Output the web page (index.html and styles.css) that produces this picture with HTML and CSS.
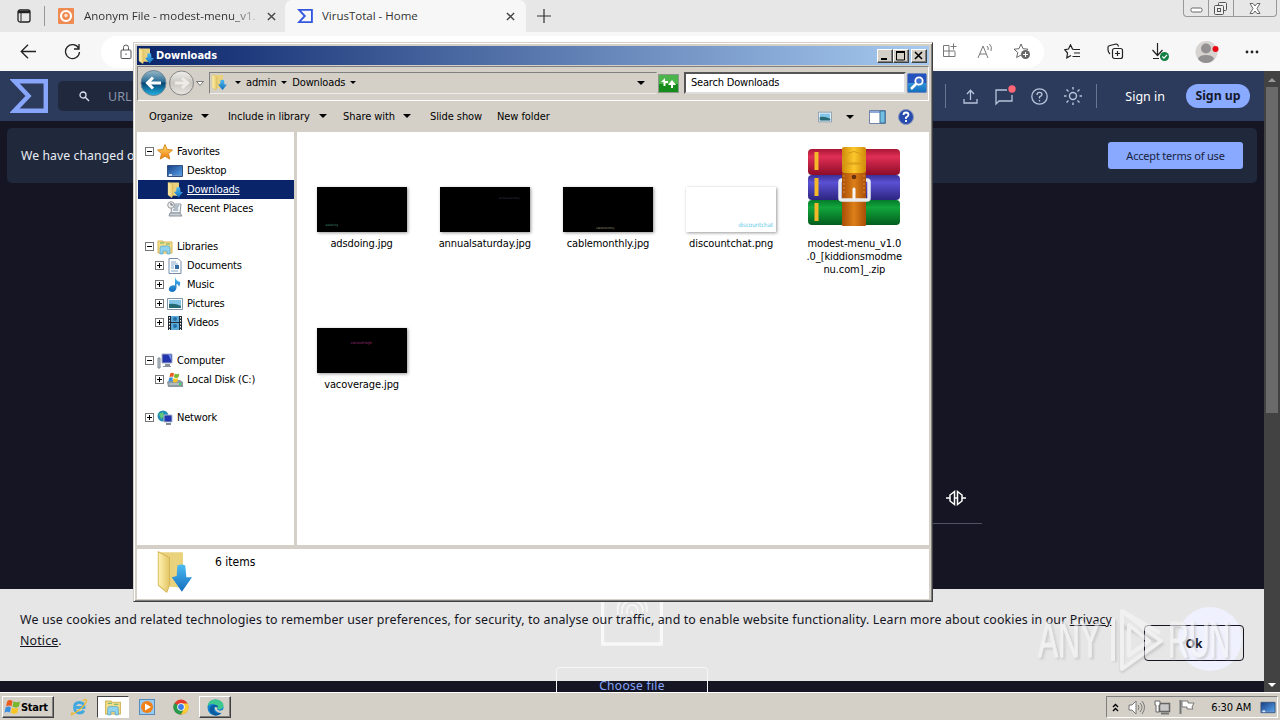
FILE: index.html
```html
<!DOCTYPE html>
<html lang="en">
<head>
  <meta charset="UTF-8">
  <title>VirusTotal - Home</title>
  <link rel="stylesheet" href="styles.css">
</head>
<body>
  <svg class="defs" width="0" height="0">
    <defs>
      <linearGradient id="gFolder" x2="1" y2="0"><stop offset="0" stop-color="#fff3b0"/><stop offset="1" stop-color="#e2c466"/></linearGradient>
      <linearGradient id="gBlue" x2="0" y2="1"><stop offset="0" stop-color="#4bbcf3"/><stop offset="1" stop-color="#146dbd"/></linearGradient>
      <linearGradient id="gScreen" x2="1" y2="1"><stop offset="0" stop-color="#173d83"/><stop offset="1" stop-color="#5aa8ef"/></linearGradient>
      <linearGradient id="gStar" x2="0" y2="1"><stop offset="0" stop-color="#ffe16b"/><stop offset="1" stop-color="#f0780a"/></linearGradient>
      <linearGradient id="gNav" x2="0" y2="1"><stop offset="0" stop-color="#9ab8c8"/><stop offset=".45" stop-color="#2a6d96"/><stop offset=".5" stop-color="#0a4470"/><stop offset="1" stop-color="#20b4e8"/></linearGradient>
      <linearGradient id="gNavOff" x2="0" y2="1"><stop offset="0" stop-color="#f0efec"/><stop offset=".5" stop-color="#c9c6c0"/><stop offset="1" stop-color="#e8e6e2"/></linearGradient>
      <linearGradient id="gRed" x2="0" y2="1"><stop offset="0" stop-color="#a81735"/><stop offset=".3" stop-color="#e02f55"/><stop offset="1" stop-color="#8c0c28"/></linearGradient>
      <linearGradient id="gPurple" x2="0" y2="1"><stop offset="0" stop-color="#3b3096"/><stop offset=".3" stop-color="#5a50d4"/><stop offset="1" stop-color="#2d2580"/></linearGradient>
      <linearGradient id="gGreen" x2="0" y2="1"><stop offset="0" stop-color="#047a2b"/><stop offset=".3" stop-color="#12a63c"/><stop offset="1" stop-color="#025d1d"/></linearGradient>
      <linearGradient id="gBelt" x2="1" y2="0"><stop offset="0" stop-color="#a84e08"/><stop offset=".5" stop-color="#dd7f18"/><stop offset="1" stop-color="#a84e08"/></linearGradient>
      <linearGradient id="gBeltTop" x2="1" y2="0"><stop offset="0" stop-color="#d08a08"/><stop offset=".5" stop-color="#fbc82c"/><stop offset="1" stop-color="#d08a08"/></linearGradient>
    </defs>
    <symbol id="folder" viewBox="0 0 16 16">
      <path d="M2 .5h9.500q.5 0 .5.500v13l-7-.5z" fill="#ead27d"/><path d="M1 .3l5 2.200V13l-1.200 2.700L1 13z" fill="url(#gFolder)" stroke="#d4b655" stroke-width=".4"/>
      <path d="M9.500 5.500q2-.7 3.500 0l.5 4.500H16l-4.500 5.500L7 10l2.200-.5z" fill="url(#gBlue)"/>
    </symbol>
    <symbol id="lib" viewBox="0 0 16 16">
      <path d="M1 2h5l1 1h8v11H1z" fill="#f6df8a" stroke="#d5b75c"/><path d="M3 4h4M9 5h4" stroke="#5fae6b"/>
      <path d="M3 15V9q0-2 2-2h6q2 0 2 2v6h-3v-3H6v3z" fill="#8fd3ee" stroke="#4a9cc0" stroke-width=".6"/>
    </symbol>
    <symbol id="monitor" viewBox="0 0 16 16"><path d="M.5 2.500h15v11H.5z" fill="url(#gScreen)" stroke="#33507c"/><path d="M1 12h14v1H1z" fill="#6d92c8"/><path d="M2 11h3v2H2z" fill="#cfe2f4"/></symbol>
    <symbol id="pic" viewBox="0 0 16 16"><path d="M.5 2.500h15v11H.5z" fill="#fff" stroke="#7f95a8"/><path d="M2 4h12v8H2z" fill="#82c5e8"/><path d="M2 8q6-1 12 2v2H2z" fill="#256a75"/></symbol>
    <symbol id="flag" viewBox="0 0 16 16">
      <path d="M3 2q3-2 5 0L7 7Q5 5 2 7z" fill="#ec5a1e"/><path d="M9 2q3 2 6 0l-1 5q-3 2-6 0z" fill="#78b62d"/>
      <path d="M1.500 8q3-2 5 0l-1 5q-2-2-5 0z" fill="#3a8fdf"/><path d="M7.500 8q3 2 6 0l-1 5q-3 2-6 0z" fill="#f8c522"/>
    </symbol>
    <symbol id="x" viewBox="0 0 10 10"><path d="M1 1l8 8M9 1L1 9" fill="none" stroke="#444" stroke-width="1.500"/></symbol>
    <symbol id="sigma" viewBox="0 0 38 34"><path d="M4.500 2.200H35.800v29.600H4.500L18.500 17z" fill="none" stroke="currentColor" stroke-width="4.500"/></symbol>
  </svg>

  <div class="browser">
    <div class="tabs">
      <svg class="tab-menu" width="14" height="14"><rect x="1" y="1" width="12" height="12" rx="2" fill="none" stroke="#222" stroke-width="1.300"/><path d="M1 3h12" stroke="#222" stroke-width="2.500"/><path d="M4 3v9" stroke="#222"/></svg>
      <div class="tab">
        <svg width="16" height="16"><rect width="16" height="16" rx="1" fill="#ef8a51"/><circle cx="8" cy="8" r="5" fill="none" stroke="#fff" stroke-width="2.200"/><circle cx="8" cy="7.500" r="1.800" fill="#ffe0d0"/></svg>
        <span class="tab-title fade">Anonym File - modest-menu_v1.</span>
        <svg width="9" height="9"><use href="#x"/></svg>
      </div>
      <div class="tab active">
        <svg class="blue" width="16" height="14"><use href="#sigma"/></svg>
        <span class="tab-title">VirusTotal - Home</span>
        <svg width="9" height="9"><use href="#x"/></svg>
      </div>
      <svg class="plus" width="14" height="14"><path d="M7 0v14M0 7h14" stroke="#333" stroke-width="1.200"/></svg>
      <div class="win-btns">
        <span><svg width="13" height="6"><rect x="1" y="1" width="11" height="4" rx="1.500" fill="#fff" stroke="#666"/></svg></span>
        <span><svg width="14" height="13" fill="#eee" stroke="#555"><rect x="4.500" y=".5" width="8" height="8" rx="1"/><rect x=".5" y="3.500" width="9" height="9" rx="1"/><rect x="3.500" y="6.500" width="3" height="3"/></svg></span>
        <span class="wide"><svg width="12" height="11"><path d="M1 .5h3l2 2.500L8 .5h3L8 5.500l3 5H8L6 8l-2 2.500H1l3-5z" fill="#fff" stroke="#666"/></svg></span>
      </div>
    </div>

    <div class="toolbar">
      <svg class="back" width="17" height="15"><path d="M16 7.500H1M8 .7L1.200 7.500 8 14.300" fill="none" stroke="#222" stroke-width="1.300"/></svg>
      <svg class="reload" width="17" height="17"><path d="M14.800 5.500A7 7 0 1 0 15.500 9M15 1v5h-5" fill="none" stroke="#222" stroke-width="1.300"/></svg>
      <div class="address">
        <svg width="12" height="16" fill="none" stroke="#555"><rect x="1" y="6" width="10" height="8.500" rx="1"/><path d="M3.500 6V3.500q0-2.500 2.500-2.500t2.500 2.500V6M6 9.500v1.500"/></svg>
        <div class="address-icons">
          <svg width="16" height="16" fill="none" stroke="#777"><path d="M7 2.500H1.500v11H13V8.500M1.500 8H13M7 2.500v11M11.500.5v6M8.500 3.500h6"/></svg>
          <svg width="17" height="16" fill="none" stroke="#777"><path d="M1 15L6 3l5 12M3 11h6M10 3q2 2 1 4M12.500 1q3 3 1.500 7"/></svg>
          <svg width="18" height="17" fill="none" stroke="#666"><path d="M8 12l-4.400 2.500 1.200-5L1 6.200l5-.5L8 1l2 4.700 5 .5-1 1"/><circle cx="12.500" cy="11.500" r="4.500" fill="#666" stroke="none"/><path d="M12.500 9v5M10 11.500h5" stroke="#fff"/></svg>
        </div>
      </div>
      <div class="tools">
        <svg width="17" height="16" fill="none" stroke="#222" stroke-width="1.200"><path d="M9.500 5.500L8.500 5 6.500.8 4.500 5 .8 5.700 3.500 9 2.800 13.800 7 11.500M9.500 5.500H16M10 9h6M8.500 12.500H16"/></svg>
        <svg width="17" height="17" fill="none" stroke="#222" stroke-width="1.200"><rect x="5.500" y="5.500" width="10" height="10" rx="2"/><path d="M10.500 8v5M8 10.500h5M3 11Q1 9 1 7V4q0-1 2-1.500L9 1q2 0 2.500 2.500"/></svg>
        <svg width="18" height="18"><path d="M6.500 0v12M1.500 7l5 5.500 5-5.500M2 15.500h6" fill="none" stroke="#222" stroke-width="1.200"/><circle cx="13.500" cy="13.500" r="4.500" fill="#128044"/><path d="M11.300 13.500l1.700 1.700 3-3.400" fill="none" stroke="#fff" stroke-width="1.200"/></svg>
        <svg width="24" height="22"><circle cx="11.500" cy="11" r="11" fill="#d6d3d1"/><circle cx="11" cy="7.500" r="5" fill="#929090"/><path d="M3 18q1-4 8-4t8 4q-3 4-8 4t-8-4z" fill="#929090"/><circle cx="20.500" cy="8" r="3" fill="#e60d18"/></svg>
        <svg width="14" height="4" fill="#222"><circle cx="2" cy="2" r="1.400"/><circle cx="7" cy="2" r="1.400"/><circle cx="12" cy="2" r="1.400"/></svg>
      </div>
    </div>

    <div class="page">
      <div class="site">
        <header class="vt-head">
          <svg class="vt-logo" width="38" height="34"><use href="#sigma"/></svg>
          <div class="vt-search">
            <svg width="11" height="11" fill="none" stroke="#dce2ef" stroke-width="1.300"><circle cx="4" cy="4" r="3"/><path d="M6.300 6.300L10 10"/></svg>
            <span>URL</span>
          </div>
          <div class="vt-actions">
            <i></i>
            <svg width="15" height="15" fill="none" stroke="#b8c4dc" stroke-width="1.300"><path d="M7.500 11V2M4 5l3.500-3.700L11 5M1 10v4h13v-4"/></svg>
            <svg width="22" height="22" fill="none" stroke="#b8c4dc" stroke-width="1.300"><path d="M13 5H2v14l3-3h13V10"/><circle cx="18" cy="4" r="3.700" fill="#ff6675" stroke="none"/></svg>
            <svg width="17" height="17" fill="none" stroke="#b8c4dc" stroke-width="1.300"><circle cx="8.500" cy="8.500" r="7.700"/><path d="M6 7q0-2.700 2.500-2.700T11 6.600Q11 8 8.500 8.800v1.700M8.500 12v1.400"/></svg>
            <svg width="20" height="20" fill="none" stroke="#b8c4dc" stroke-width="1.400"><circle cx="10" cy="10" r="3.500"/><path d="M10 1v2.500M10 16.500V19M1 10h2.500M16.500 10H19M3.500 3.500l2 2M14.500 14.500l2 2M3.500 16.500l2-2M14.500 5.500l2-2"/></svg>
            <i></i>
          </div>
          <span class="sign-in">Sign in</span>
          <span class="sign-up">Sign up</span>
        </header>
        <div class="notice">
          <span>We have changed our</span>
          <button>Accept terms of use</button>
        </div>
        <svg class="search-tab" width="20" height="16" fill="none" stroke="#fff" stroke-width="1.500"><path d="M0 8h4M16 8h4M8.500 1.500L4 5v6l4.500 3.500zM11.500 1.500L16 5v6l-4.500 3.500zM8.500 8h3"/></svg>
        <div class="tab-line"></div>
        <div class="choose"><span>Choose file</span></div>
        <div class="cookies">
          <svg class="scan" width="62" height="60" fill="none" stroke="#f8f8f8"><path d="M1.500 0v55h59V0" stroke-width="3.500"/><path d="M17 26q-3-18 14-18 16 0 15 15M21 25q-1-13 10-13t11 11M26 25q-1-9 5-9t6 8M30 22q3 7 7 5" stroke-width="1.500"/></svg>
          <div class="choose-ghost"></div>
          <div class="halo"></div>
          <p>We use cookies and related technologies to remember user preferences, for security, to analyse our traffic, and to enable website functionality. Learn more about cookies in our <u>Privacy</u><br><u>Notice</u>.</p>
          <button class="ok">Ok</button>
        </div>
        <svg class="watermark" width="205" height="70">
          <g class="wm-shade"><text x="4" y="53" textLength="62" lengthAdjust="spacingAndGlyphs">ANY</text><text x="134" y="53" textLength="62" lengthAdjust="spacingAndGlyphs">RUN</text><path d="M79 14v42M86 20v45l40-27z"/></g>
          <g class="wm-light"><text x="2" y="51" textLength="62" lengthAdjust="spacingAndGlyphs">ANY</text><text x="132" y="51" textLength="62" lengthAdjust="spacingAndGlyphs">RUN</text><path d="M77 12v43M86 5v58l39-28zM86 5l38 22M93 19v30l20-14z"/></g>
        </svg>
      </div>
      <div class="scroll"><b class="up"></b><div class="thumb"></div><b class="down"></b></div>
    </div>
  </div>

  <div class="window">
    <div class="title">
      <svg width="16" height="16"><use href="#folder"/></svg><strong>Downloads</strong>
      <div class="title-btns">
        <span><svg width="12" height="10"><path d="M2 8h6" stroke="#000" stroke-width="2"/></svg></span>
        <span><svg width="12" height="10"><path d="M1.500 1v8h8V1" fill="none" stroke="#000"/><path d="M1 1h9" stroke="#000" stroke-width="2"/></svg></span>
        <span class="gap"><svg width="12" height="10"><path d="M2 1l7 7M9 1L2 8" stroke="#000" stroke-width="1.600"/></svg></span>
      </div>
    </div>
    <div class="nav">
      <svg width="66" height="28">
        <circle cx="15.500" cy="14" r="12.500" fill="url(#gNav)" stroke="#6d8795"/><path d="M23 14H9.500M15 8.500L9.500 14l5.500 5.500" fill="none" stroke="#fff" stroke-width="3"/>
        <circle cx="43.500" cy="14" r="12" fill="url(#gNavOff)" stroke="#858585"/><path d="M37 14h12M44 9l5.500 5-5.500 5" fill="none" stroke="#edebe7" stroke-width="3"/>
        <path d="M58.500 12.500h7l-3.500 4z" fill="#fff" stroke="#777"/>
      </svg>
      <div class="crumbs">
        <svg class="f" width="16" height="17"><use href="#folder"/></svg><b></b><span>admin</span><b></b><span>Downloads</span><b></b><b class="last"></b>
      </div>
      <svg class="refresh" width="21" height="19"><rect x=".5" y=".5" width="20" height="18" fill="#4bb54c" stroke="#8a998a"/><rect x="1" y="10" width="19" height="8" fill="#168c1c"/><path d="M3 8l4-4v3h3v2H7.500v3H5.500V8zM18 11l-4-5-4 5h3v3h2v-3z" fill="#fff"/></svg>
      <div class="find">Search Downloads</div>
      <svg width="20" height="20"><rect x=".5" y=".5" width="19" height="19" rx="1" fill="url(#gBlue)" stroke="#6c88bd"/><path d="M1 1h18v9H1z" fill="#2452bd"/><circle cx="12" cy="8" r="3.700" fill="#3d71cf" stroke="#fff" stroke-width="1.800"/><path d="M9 11l-5 5" stroke="#fff" stroke-width="2.500"/></svg>
    </div>
    <div class="commands">
      <span class="c1">Organize<b></b></span><span class="c2">Include in library<b></b></span><span class="c3">Share with<b></b></span><span class="c4">Slide show</span><span>New folder</span>
      <div class="views">
        <svg width="14" height="14"><use href="#pic"/></svg><b></b>
        <svg width="17" height="14"><path d="M.5.500h16v13H.5z" fill="#fff" stroke="#7085a5"/><path d="M1 1h10v2H1z" fill="#8cabdb"/><path d="M11 1h5v12h-5z" fill="#6ebfe1" stroke="#416f96"/></svg>
        <svg width="16" height="16"><circle cx="8" cy="8" r="7.500" fill="#284cae" stroke="#8997b8"/><path d="M5.500 6q0-2.500 2.500-2.500T10.500 6Q10.500 7 8 8.500V10M8 11v2" fill="none" stroke="#fff" stroke-width="1.800"/></svg>
      </div>
    </div>
    <div class="main">
      <div class="tree">
        <div class="row"><i class="box"></i><svg width="16" height="16"><path d="M8 .5l2.200 5 5.300.5-4 3.600 1.200 5.500L8 12.200l-4.700 2.900 1.200-5.500L.5 6l5.300-.5z" fill="url(#gStar)" stroke="#d78b25"/></svg>Favorites</div>
        <div class="row sub"><i></i><svg width="16" height="16"><use href="#monitor"/></svg>Desktop</div>
        <div class="row sub selected"><i></i><svg width="16" height="16"><use href="#folder"/></svg><u>Downloads</u></div>
        <div class="row sub"><i></i><svg width="16" height="16"><path d="M5 3h9l-1 9H4z" fill="#f2f4f6" stroke="#8a969f"/><path d="M7 5h5M7 7h4M6 9h5" stroke="#718797"/><path d="M3 12h10l2 3H2z" fill="#c8ced4" stroke="#89949d"/><circle cx="4" cy="4" r="3.300" fill="#eee" stroke="#999"/><path d="M4 2v2h2" fill="none" stroke="#567"/></svg>Recent Places</div>
        <div class="row gap"><i class="box"></i><svg width="16" height="16"><use href="#lib"/></svg>Libraries</div>
        <div class="row sub"><i class="box plus-box"></i><svg width="16" height="16"><path d="M2 .5h9l3 3v12H2z" fill="#fff" stroke="#758da8"/><path d="M4 4h5M4 6h7M4 8h3M4 10h3M4 13h7" stroke="#82a8c9"/><path d="M8 7h4v4H8z" fill="#326da6"/></svg>Documents</div>
        <div class="row sub"><i class="box plus-box"></i><svg width="16" height="16"><path d="M8 0q1 4 5 5 1 2-1 5-.5-3-2.500-3v4q-1 4-4.500 4-4-.5-3-4 1.500-3.500 6-2.500z" fill="url(#gBlue)"/></svg>Music</div>
        <div class="row sub"><i class="box plus-box"></i><svg width="16" height="16"><use href="#pic"/></svg>Pictures</div>
        <div class="row sub"><i class="box plus-box"></i><svg width="16" height="16"><path d="M1 1h14v14H1z" fill="#222c36"/><path d="M4 1h8v6H4zM4 8h8v7H4z" fill="#5aa9d8"/><path d="M2.500 2v13M13.500 2v13" stroke="#fff" stroke-dasharray="1.500 1.500"/><circle cx="8" cy="11" r="2" fill="#2471a7"/><circle cx="8" cy="4" r="2" fill="#2471a7"/></svg>Videos</div>
        <div class="row gap"><i class="box"></i><svg width="16" height="16"><path d="M5 1h10v9H5z" fill="#2335af" stroke="#a5b1c2"/><path d="M11 1l3 6V2z" fill="#7090ed"/><path d="M8 11h5v2H8zM6 13h8v1H6z" fill="#87929d"/><path d="M1 5h2v10H1z" fill="#c1c8cf" stroke="#7c8893"/></svg>Computer</div>
        <div class="row sub"><i class="box plus-box"></i><svg width="16" height="16"><path d="M0 10l3-2h10l3 2v5H1z" fill="#8c9ba1"/><path d="M2 12h10" stroke="#ddd"/><path d="M12 12h2" stroke="#37df58" stroke-width="2"/><svg x="1" width="12" height="12"><use href="#flag"/></svg></svg>Local Disk (C:)</div>
        <div class="row gap"><i class="box plus-box"></i><svg width="16" height="16"><circle cx="6" cy="6" r="5.500" fill="#228eb5"/><path d="M2 4l4-2 1 4-3 3z" fill="#62c776"/><path d="M7 5h8v7H7z" fill="#2335af" stroke="#aebaca"/><path d="M9 14h5" stroke="#818c98" stroke-width="2"/></svg>Network</div>
      </div>
      <div class="files">
        <div class="file"><div class="icon"><div class="thumbnail t1">adsdoing</div></div>adsdoing.jpg</div>
        <div class="file"><div class="icon"><div class="thumbnail t2">annualsaturday</div></div>annualsaturday.jpg</div>
        <div class="file"><div class="icon"><div class="thumbnail t3">cablemonthly</div></div>cablemonthly.jpg</div>
        <div class="file"><div class="icon"><div class="thumbnail t4">discountchat</div></div>discountchat.png</div>
        <div class="file">
          <div class="icon zip">
            <svg width="94" height="82">
              <rect x="1" y="3" width="92" height="26" rx="4" fill="url(#gRed)"/><rect x="1" y="29" width="92" height="25" rx="4" fill="url(#gPurple)"/><rect x="1" y="54" width="92" height="25" rx="4" fill="url(#gGreen)"/>
              <path d="M9.500 6v18M9.500 32v18M9.500 57v18" stroke="#f5b829" stroke-width="4"/>
              <rect x="35" y="48" width="24" height="32" rx="1" fill="url(#gBelt)"/><rect x="35" y="1" width="24" height="26" rx="2" fill="url(#gBeltTop)"/><path d="M36 17V12q11-13 22 0v5zM35 18h24" fill="none" stroke="#d69a19"/>
              <rect x="33" y="34" width="29" height="20" rx="2" fill="none" stroke="#e9ebef" stroke-width="3.500"/><path d="M35 27h24v21q0 3-4 3H39q-4 0-4-3z" fill="url(#gBelt)"/>
              <circle cx="47" cy="31" r="2.300" fill="#663011"/><path d="M47 43v9" stroke="#f5f5f5" stroke-width="3" stroke-linecap="round"/><path d="M37 29v19M57 29v19" stroke="#ffb65c" stroke-dasharray="2 2" stroke-width=".6"/>
            </svg>
          </div>modest-menu_v1.0<br>.0_[kiddionsmodme<br>nu.com]_.zip
        </div>
        <div class="file"><div class="icon"><div class="thumbnail t5">vacoverage</div></div>vacoverage.jpg</div>
      </div>
    </div>
    <div class="details"><svg width="36" height="42" viewBox="0 0 16 16" preserveAspectRatio="none"><use href="#folder"/></svg><span>6 items</span></div>
  </div>

  <div class="taskbar">
    <div class="start"><svg width="17" height="17"><use href="#flag"/></svg>Start</div>
    <div class="task"><svg width="18" height="18" fill="none"><path d="M4.500 9.500H14Q14 4.500 9.300 4.500T4.500 9.500t5 5.500q3 0 4.300-2.500" stroke="#43a9df" stroke-width="2.800"/><path d="M2.500 14Q-.5 18.500 4 15.500 14 9.500 16.500 3q.5-2.500-4-.5" stroke="#ebb733" stroke-width="1.300"/></svg></div>
    <div class="task pressed"><svg width="18" height="17"><use href="#lib"/></svg></div>
    <div class="task"><svg width="16" height="16"><rect x=".5" y=".5" width="15" height="15" fill="#9bcaf0" stroke="#568dbf"/><circle cx="8" cy="8" r="6" fill="#f28018"/><path d="M6 4.500l6 3.500-6 3.500z" fill="#fff"/></svg></div>
    <div class="task"><svg width="16" height="16"><circle cx="8" cy="8" r="7.500" fill="#e23c2e"/><path d="M1.500 4A7.500 7.500 0 0 0 8 15.500L11 10 8 8z" fill="#279b4b"/><path d="M8 4.500h6.700A7.500 7.500 0 0 1 8 15.500L11.500 9z" fill="#f9ce33"/><circle cx="8" cy="8" r="3.800" fill="#fff"/><circle cx="8" cy="8" r="2.900" fill="#3e7de8"/></svg></div>
    <div class="task raised"><svg width="17" height="17"><circle cx="8.500" cy="8.500" r="8" fill="#1383ce"/><path d="M.5 8Q1 0 9 .5q8 1 7.500 7-2 4-6 2.500 0-5-5-5-4 0-5 3z" fill="#3dc890"/><path d="M7 8q-1 5 3 6 3 1 5-1-3 4-7 3.500Q1 14 3 9q1-3 5-3 3 0 3 2" fill="#0b5b9f"/><path d="M8 8q3 0 2 2 2 3 7 .5v3q-4 1-6.500-.5Q7 11 8 8z" fill="#d4d0c8"/></svg></div>
    <div class="tray">
      <svg width="7" height="9"><path d="M1 4l2.500-2.500L6 4M1 8l2.500-2.500L6 8" fill="none" stroke="#000" stroke-width="1.400"/></svg>
      <svg width="17" height="15" fill="none" stroke="#777"><path d="M1 5h3l4-4v13l-4-4H1z" fill="#fff"/><path d="M10 5q2 2.500 0 5M12 3q4 4 0 9M14 1q5 6 0 13"/></svg>
      <svg width="17" height="16"><path d="M5.500 4.500h10v8h-10z" fill="#c8c8c8" stroke="#666" stroke-width="1.500"/><path d="M7 14.500h8" stroke="#777" stroke-width="2"/><path d="M1 2h5v4H5v7H2V6H1z" fill="#fff" stroke="#666"/></svg>
      <svg width="17" height="16"><path d="M1.500 1v14" stroke="#777" stroke-width="2"/><path d="M3 2h6v2h6l-2 4 1 2H8V8H3z" fill="#fff" stroke="#777"/></svg>
      <span>6:30 AM</span>
      <svg width="16" height="15"><use href="#monitor"/></svg>
    </div>
  </div>
</body>
</html>
```
FILE: styles.css
```css
* { box-sizing: border-box; }
body { margin: 0; width: 1280px; height: 720px; overflow: hidden; position: relative; font: 11px/13px "DejaVu Sans Condensed", "DejaVu Sans", sans-serif; font-stretch: condensed; color: #000; }
svg { display: block; flex: none; }
.defs { position: absolute; }
span, strong { white-space: nowrap; }

/* browser */
.browser { height: 692px; display: flex; flex-direction: column; font-family: "Open Sans", sans-serif; font-stretch: normal; }
.tabs { height: 32px; background: #e7e7e7; display: flex; align-items: center; }
.tab-menu { margin: 0 13px 0 17px; }
.tab { width: 241px; height: 32px; padding: 0 9px 0 13px; border-left: 1px solid #999; border-image: linear-gradient(transparent 20%, #999 20%, #999 80%, transparent 80%) 1; display: flex; align-items: center; }
.tab.active { height: 32px; background: #f7f7f7; border: 0; border-radius: 7px 7px 0 0; padding: 0 11px 0 12px; }
.tab-title { flex: 1; margin: 0 8px 0 9px; font-size: 11.5px; color: #333; overflow: hidden; line-height: 18px; }
.fade { margin-left: 10px; -webkit-mask-image: linear-gradient(90deg, #000 84%, transparent 102%); }
.blue { color: #3457e0; }
.plus { margin-left: 11px; }
.win-btns { display: flex; height: 17px; margin: 0 3px 0 auto; align-self: flex-start; border: 1px solid #999; border-top: 0; border-radius: 0 0 4px 4px; }
.win-btns span { width: 25px; display: flex; align-items: center; justify-content: center; border-right: 1px solid #999; }
.win-btns span.wide { width: 42px; border: 0; }
.win-btns span:first-child { padding-top: 4px; }
.toolbar { height: 39px; flex: none; background: #f7f7f7; display: flex; align-items: center; }
.back { margin-left: 20px; }
.reload { margin-left: 27px; }
.address { width: 943px; height: 32px; margin-left: 20px; padding: 0 13px 0 19px; border-radius: 16px; background: #fff; display: flex; align-items: center; justify-content: space-between; }
.address-icons { display: flex; gap: 19px; }
.tools { flex: 1; display: flex; justify-content: space-between; align-items: center; padding: 0 21px 0 20px; }
.page { flex: 1; display: flex; min-height: 0; }
.site { width: 1264px; position: relative; background: #151523; overflow: hidden; font-family: "Noto Sans", sans-serif; }
.vt-head { height: 50px; background: #2c3a5b; display: flex; align-items: center; }
.vt-logo { margin-left: 10px; color: #87a5fa; }
.vt-search { width: 620px; height: 30px; margin-left: 10px; padding-left: 21px; border-radius: 5px; background: #20283d; color: #8993aa; font-size: 12.5px; display: flex; align-items: center; gap: 18px; }
.vt-actions { margin-left: auto; width: 152px; display: flex; align-items: center; justify-content: space-between; }
.vt-actions i { width: 1px; height: 24px; background: #6a7691; }
.vt-actions svg { position: relative; left: 2px; }
.sign-in { color: #fff; font-size: 12.5px; margin: 0 21px 0 28px; }
.sign-up { width: 64px; height: 24px; margin-right: 14px; border-radius: 12px; background: #8aaaff; color: #15182c; font: bold 12.3px/24px "Noto Sans"; text-align: center; }
.notice { height: 55px; margin: 7px 7px 0; padding: 0 14px; border-radius: 5px; background: #20293b; color: #e9edf5; font-size: 12.2px; letter-spacing: .1px; display: flex; align-items: center; justify-content: space-between; }
.notice button { width: 135px; height: 27px; border: 0; border-radius: 3px; background: #88a9ff; color: #18223e; font: 11px "Noto Sans"; letter-spacing: -.2px; padding: 0; }
.search-tab { position: absolute; left: 946px; top: 419px; }
.tab-line { position: absolute; left: 800px; top: 452px; width: 182px; height: 1px; background: #4d5361; }
.cookies { position: absolute; left: 0; top: 518px; width: 1264px; height: 92px; background: #e6e6e6; color: #151523; padding: 20px; font-size: 12.4px; letter-spacing: .139px; line-height: 21px; white-space: nowrap; }
.cookies p { margin: 0; position: relative; }
.scan { position: absolute; left: 601px; top: 0; }
.choose, .choose-ghost { position: absolute; left: 556px; width: 152px; border: 1px solid #f6f6f8; border-radius: 4px; }
.choose { top: 596px; height: 38px; color: #87a5fa; font-size: 12px; letter-spacing: .3px; line-height: 36px; text-align: center; }
.choose-ghost { top: 78px; height: 14px; border-bottom: 0; border-radius: 4px 4px 0 0; }
.halo { position: absolute; left: 1178px; top: 18px; width: 64px; height: 64px; border-radius: 50%; background: #eff1fe; }
.ok { position: absolute; left: 1144px; top: 36px; width: 100px; height: 36px; border: 1px solid #151523; border-radius: 4px; background: none; font: bold 12px "Noto Sans"; color: #151523; }
.watermark { position: absolute; left: 1036px; top: 535px; opacity: .6; }
.watermark text { font: 50px "Liberation Sans"; stroke: none; }
.watermark g { fill: none; stroke-width: 4; stroke-linejoin: round; }
.wm-shade { stroke: #bbb; filter: blur(1.2px); }
.wm-shade text { fill: #bbb; stroke: #bbb; stroke-width: 1px; }
.wm-light { stroke: #f7f7f7; }
.wm-light text { fill: #f7f7f7; stroke: #f7f7f7; stroke-width: 1px; }
.scroll { width: 16px; background: #424242; display: flex; flex-direction: column; align-items: center; padding: 7px 0 5px; }
.thumb { width: 12px; height: 326px; margin: 5px 0 auto; background: #6a6a6a; }
.scroll b { border: 4px solid transparent; border-top: 0; border-bottom: 4px solid #999; }
.scroll .down { border-bottom: 0; border-top: 4px solid #fff; }

/* explorer */
.window { position: absolute; left: 133px; top: 42px; width: 800px; height: 560px; padding: 3px 3px 3px; background: #d4d0c8; border: 1px solid #d4d0c8; border-right-color: #404040; border-bottom-color: #404040; box-shadow: inset 1px 1px #fff, inset -1px -1px #808080; }
.title { height: 19px; background: linear-gradient(90deg, #0a246a, #a6caf0); color: #fff; display: flex; align-items: center; gap: 2px; padding-left: 1px; }
.title-btns { margin: 0 2px 0 auto; display: flex; }
.title-btns span, .raised, .start { background: #d4d0c8; border: 1px solid; border-color: #fff #404040 #404040 #fff; box-shadow: inset -1px -1px #808080; }
.title-btns span { width: 16px; height: 14px; padding: 1px; }
.title-btns .gap { margin-left: 2px; }
.nav { height: 35px; margin-top: 1px; padding: 0 1px 1px 0; border: 1px solid; border-color: #808080 #fff #fff #808080; display: flex; align-items: center; }
.crumbs { width: 448px; height: 22px; margin: 0 1px 0 5px; border: 1px solid; border-color: #808080 #d4d0c8 #eee #808080; display: flex; align-items: center; gap: 5px; padding: 0 0 1px 1px; letter-spacing: -.15px; }
.crumbs .f { margin-right: 3px; }
b { display: inline-block; flex: none; border: 3px solid transparent; border-top: 3px solid #000; border-bottom: 0; width: 0; height: 0; }
.crumbs .last { margin: 0 11px 0 auto; border-width: 4px 4px 0; }
.find { flex: 1; height: 22px; margin: 0 1px 0 5px; background: #fff; border: 2px solid; border-color: #555 #ddd #ddd #555; padding: 2px 5px; letter-spacing: -.2px; }
.commands { height: 31px; display: flex; align-items: center; padding-left: 12px; letter-spacing: -.08px; }
.commands b { border-width: 4px 4px 0; margin-left: 8px; vertical-align: 2px; }
.c1 { width: 79px; }
.c2 { width: 115px; }
.c3 { width: 87px; }
.c4 { width: 67px; }
.c2 b { margin-left: 9px; }
.views { margin: 0 15px 0 auto; display: flex; align-items: center; gap: 12px; }
.views b { margin: 0 3px 0 2px; }
.main { height: 413px; display: flex; background: #fff; }
.tree { width: 160px; border-right: 3px solid #d4d0c8; padding: 10px 0 0 1px; letter-spacing: -.2px; }
.row { height: 19px; display: flex; align-items: center; padding-left: 7px; white-space: nowrap; }
.row svg { margin: 0 4px 0 3px; }
.row i { width: 9px; height: 9px; }
.row.sub { padding-left: 17px; }
.row.gap { margin-top: 19px; }
.selected { background: #0a246a; color: #fff; }
.box { border: 1px solid #777; background: linear-gradient(#000, #000) center / 5px 1px no-repeat; }
.plus-box { background: linear-gradient(#000, #000) center / 5px 1px no-repeat, linear-gradient(#000, #000) center / 1px 5px no-repeat; }
.files { display: grid; grid-template-columns: repeat(5, 123.2px); grid-auto-rows: 141px; padding: 3px 0 0 3px; align-content: start; letter-spacing: -.1px; }
.file { text-align: center; }
.icon { height: 97px; margin-bottom: 5px; display: flex; align-items: flex-end; justify-content: center; }
.zip { padding-bottom: 4px; letter-spacing: -.2px; }
.thumbnail { width: 90px; height: 45px; background: #000; box-shadow: 1px 1px 3px #999; font-size: 3px; line-height: 4px; letter-spacing: 0; text-align: left; }
.t1 { color: #438c74; padding: 36px 0 0 9px; }
.t2 { color: #30304d; padding: 9px 0 0 59px; }
.t3 { color: #9c9872; padding: 39px 0 0 33px; }
.t4 { background: #fff; color: #5bc9e8; font-size: 6px; padding: 36px 0 0 52px; }
.t5 { color: #962d72; font-size: 4px; padding: 13px 0 0 34px; }
.details { height: 50px; margin-top: 4px; background: #fff; display: flex; padding: 2px 19px; }
.details span { margin: 5px 0 0 23px; font-size: 12px; }

/* taskbar */
.taskbar { height: 28px; background: #d4d0c8; border-top: 1px solid #fff; display: flex; align-items: center; padding: 2px 2px 1px; }
.start { width: 52px; height: 22px; font-weight: bold; display: flex; align-items: center; gap: 0; padding-left: 1px; margin-right: 9px; letter-spacing: -.3px; }
.task { width: 32px; height: 22px; margin-right: 2px; display: flex; align-items: center; justify-content: center; }
.pressed { background: #fff; border: 1px solid; border-color: #404040 #fff #fff #404040; }
.tray { width: 172px; height: 22px; margin-left: auto; border: 1px solid; border-color: #808080 #fff #fff #808080; display: flex; align-items: center; justify-content: space-between; padding: 0 1px 0 5px; }
.tray span { margin: 0 0 0 6px; letter-spacing: -.1px; }
```
